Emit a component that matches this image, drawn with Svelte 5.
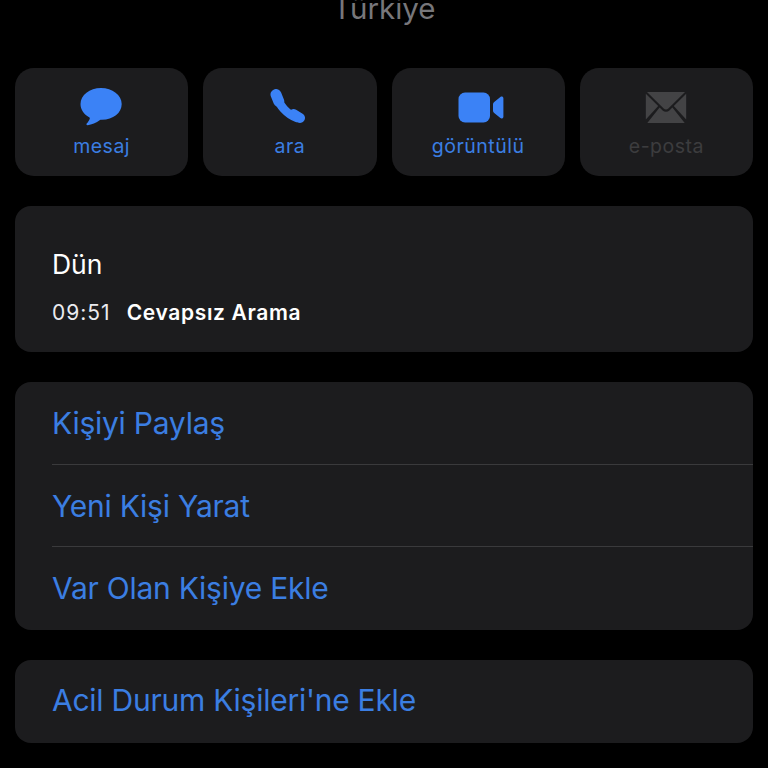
<script>
  const actions = [
    { key: 'message', label: 'mesaj' },
    { key: 'call', label: 'ara' },
    { key: 'video', label: 'görüntülü' },
    { key: 'mail', label: 'e-posta', disabled: true }
  ];

  const contactRows = ['Kişiyi Paylaş', 'Yeni Kişi Yarat', 'Var Olan Kişiye Ekle'];
</script>

<div class="screen">
  <div class="country">Türkiye</div>

  <div class="actions">
    {#each actions as action}
      <div class="action" class:disabled={action.disabled}>
        <div class="icon-slot">
          {#if action.key === 'message'}
            <svg class="icon-message" width="44" height="40" viewBox="0 0 44 40">
              <path d="M22 1C10.6 1 1.5 8 1.5 17c0 5.6 3.3 10.3 8.6 13.2.7.4.9 1 .6 1.7-.7 1.800-2 3.400-3 4.600-.6.800-.1 1.800 1 1.700 4-.3 8.500-2.300 12.300-5.100.4-.3.800-.4 1.300-.4C33.700 33 42.700 26.200 42.700 17 42.700 8 33.400 1 22 1z" fill="currentColor"/>
            </svg>
          {:else if action.key === 'call'}
            <svg class="icon-call" width="36" height="36" viewBox="0 0 36 36">
              <g fill="none" stroke="currentColor" stroke-linecap="round">
                <path d="M7 8C9 16 17 25.500 27 29" stroke-width="8.500"/>
                <path d="M6 5.500 8.800 12.500" stroke-width="11"/>
                <path d="M23.500 25 30 29" stroke-width="10"/>
              </g>
            </svg>
          {:else if action.key === 'video'}
            <svg class="icon-video" width="46" height="31" viewBox="0 0 46 31">
              <rect x="0.500" y="0.500" width="31.500" height="30" rx="6.500" fill="currentColor"/>
              <path d="M35 12.300c0-1 .4-1.800 1.200-2.400l6.200-5c1.200-.9 3-.2 3 1.400v18.400c0 1.600-1.800 2.300-3 1.400l-6.200-5c-.8-.6-1.200-1.400-1.200-2.400z" fill="currentColor"/>
            </svg>
          {:else}
            <svg class="icon-mail" width="42" height="33" viewBox="0 0 42 33">
              <path d="M2 1h38L23.300 17.500c-1.300 1.200-3.300 1.200-4.600 0z" fill="currentColor"/>
              <path d="M.8 2.800 13.200 15 .8 28.500z" fill="currentColor"/>
              <path d="M41.200 2.800 28.800 15l12.400 13.500z" fill="currentColor"/>
              <path d="M2.300 32 14.600 16.500l3 2.900c2 1.800 4.800 1.800 6.800 0l3-2.900L39.700 32z" fill="currentColor"/>
            </svg>
          {/if}
        </div>
        <span class="action-label">{action.label}</span>
      </div>
    {/each}
  </div>

  <div class="card recents">
    <div class="day">Dün</div>
    <div class="call-line">
      <span class="time">09:51</span>
      <span class="call-type">Cevapsız Arama</span>
    </div>
  </div>

  <div class="card">
    {#each contactRows as row}
      <div class="row">{row}</div>
    {/each}
  </div>

  <div class="card">
    <div class="row single">Acil Durum Kişileri'ne Ekle</div>
  </div>
</div>

<style>
  :global(body) {
    background: #000;
  }

  .screen {
    height: 768px;
    overflow: hidden;
    box-sizing: border-box;
    padding: 0 15px;
    background: #000;
    font-family: Inter, "Liberation Sans", sans-serif;
  }

  .country {
    height: 16px;
    line-height: 16px;
    margin-bottom: 52px;
    text-align: center;
    font-size: 29.500px;
    color: #77777b;
  }

  .actions {
    display: grid;
    grid-template-columns: repeat(4, 1fr);
    gap: 15px;
    margin-bottom: 30px;
  }

  .action {
    height: 108px;
    border-radius: 19px;
    background: #1c1c1e;
    color: #3b82f6;
    display: flex;
    flex-direction: column;
    align-items: center;
  }

  .action.disabled {
    color: #434345;
  }

  .icon-slot {
    height: 40px;
    margin-top: 19px;
    display: flex;
    align-items: center;
    justify-content: center;
  }

  .icon-slot svg {
    display: block;
  }

  .icon-message {
    margin-left: -2px;
  }

  .icon-call {
    margin-left: -3px;
  }

  .icon-video {
    margin-left: 5px;
  }

  .action-label {
    margin-top: 7px;
    font-size: 19.500px;
    line-height: 24px;
    letter-spacing: 0.5px;
    color: #3b7ee2;
  }

  .action.disabled .action-label {
    color: #3c3c3e;
  }

  .card {
    background: #1c1c1e;
    border-radius: 16px;
    margin-bottom: 30px;
    overflow: hidden;
  }

  .recents {
    height: 146px;
    box-sizing: border-box;
    padding: 40px 37px 0;
    color: #fff;
  }

  .day {
    font-size: 26.500px;
    line-height: 36px;
  }

  .call-line {
    margin-top: 17px;
    display: flex;
    gap: 16px;
    font-size: 21px;
    line-height: 28px;
    letter-spacing: 0.65px;
  }

  .time {
    color: #ebebf0;
    letter-spacing: 1px;
  }

  .call-type {
    font-weight: 600;
  }

  .row {
    height: 82.500px;
    line-height: 82px;
    margin-left: 37px;
    font-size: 30px;
    color: #3b7ee2;
    border-bottom: 1px solid #3a3a3c;
    box-sizing: border-box;
    letter-spacing: -0.25px;
  }

  .row:last-child {
    border-bottom: none;
  }

  .row.single {
    height: 83px;
    line-height: 81px;
  }
</style>
